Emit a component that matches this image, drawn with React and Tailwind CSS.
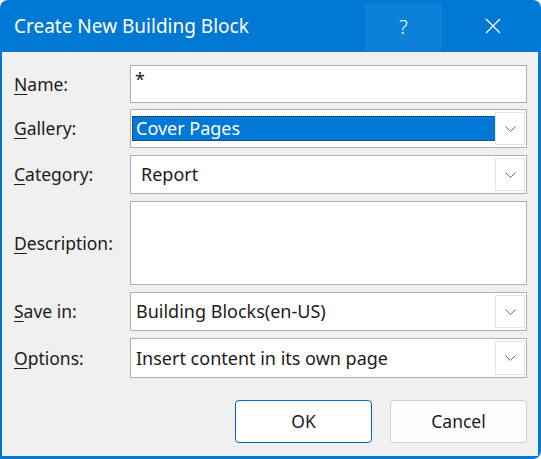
import React from 'react';

const font = { fontFamily: '"Noto Sans", "Open Sans", sans-serif' };

const Chevron = () => (
  <svg width="11" height="6" viewBox="0 0 11 6" fill="none">
    <path d="M0.5 0.5l5 5 5-5" stroke="#707070" strokeWidth="1" />
  </svg>
);

const Label = ({ k, rest }) => (
  <div className="w-[116px] shrink-0 text-[17.5px] text-[#1b1b1b]">
    <span className="underline underline-offset-[3px] decoration-1">{k}</span>
    {rest}
  </div>
);

const Select = ({ children, selected }) => (
  <div className="flex-1 h-full bg-white border border-[#b0b0b0] flex items-center relative">
    {selected ? (
      <div className="ml-[1px] h-[25px] w-[364px] bg-[#0078d7] border border-dotted border-[#2a2a2a] text-white text-[18px] flex items-center pl-[3px]">
        {children}
      </div>
    ) : (
      <div className="text-[18px] text-[#1b1b1b] pl-[5px]">{children}</div>
    )}
    <div className="absolute right-[1px] top-[2px] bottom-[2px] w-[30px] bg-white border border-[#e4e4e4] flex items-center justify-center">
      <Chevron />
    </div>
  </div>
);

export default function App() {
  return (
    <div className="w-[541px] h-[459px] bg-white" style={font}>
      <div className="w-[541px] h-[459px] bg-[#0078d4] rounded-t-[8px] rounded-br-[8px] flex flex-col overflow-hidden">
        <div className="h-[52px] shrink-0 flex items-center text-white">
          <div className="pl-[14px] text-[19px] flex-1 pt-[1px]">Create New Building Block</div>
          <div className="w-[77px] h-[48px] mt-[2px] mr-[2px] bg-[#0d80d8] flex items-center justify-center text-[20px] font-light">?</div>
          <div className="w-[97px] h-[48px] flex items-center justify-center">
            <svg width="16" height="16" viewBox="0 0 16 16">
              <path d="M1 1l14 14M15 1L1 15" stroke="white" strokeWidth="1.3" />
            </svg>
          </div>
        </div>
        <div className="flex-1 ml-[2px] mr-[3px] mb-[3px] bg-[#f0f0f0] pl-[12px] pr-[11px] pt-[13px] flex flex-col">
          <div className="flex items-center h-[38px]">
            <Label k="N" rest="ame:" />
            <div className="flex-1 h-full bg-white border border-[#b0b0b0] pl-[4px] text-[18px] text-[#1b1b1b]">*</div>
          </div>
          <div className="flex items-center h-[39px] mt-[6px]">
            <Label k="G" rest="allery:" />
            <Select selected>Cover Pages</Select>
          </div>
          <div className="flex items-center h-[39px] mt-[7px]">
            <Label k="C" rest="ategory:" />
            <Select>
              <span className="pl-[5px]">Report</span>
            </Select>
          </div>
          <div className="flex items-center h-[84px] mt-[7px]">
            <Label k="D" rest="escription:" />
            <div className="flex-1 h-full bg-white border border-[#b0b0b0]"></div>
          </div>
          <div className="flex items-center h-[39px] mt-[7px]">
            <Label k="S" rest="ave in:" />
            <Select>Building Blocks(en-US)</Select>
          </div>
          <div className="flex items-center h-[40px] mt-[7px]">
            <Label k="O" rest="ptions:" />
            <Select>Insert content in its own page</Select>
          </div>
          <div className="flex justify-end gap-[18px] mt-[22px]">
            <button className="w-[137px] h-[43px] bg-white border border-[#0067c0] rounded-[4px] text-[17.5px] text-[#1b1b1b]">OK</button>
            <button className="w-[137px] h-[43px] bg-[#fdfdfd] border border-[#d0d0d0] rounded-[4px] text-[17.5px] text-[#1b1b1b]">Cancel</button>
          </div>
        </div>
      </div>
    </div>
  );
}
